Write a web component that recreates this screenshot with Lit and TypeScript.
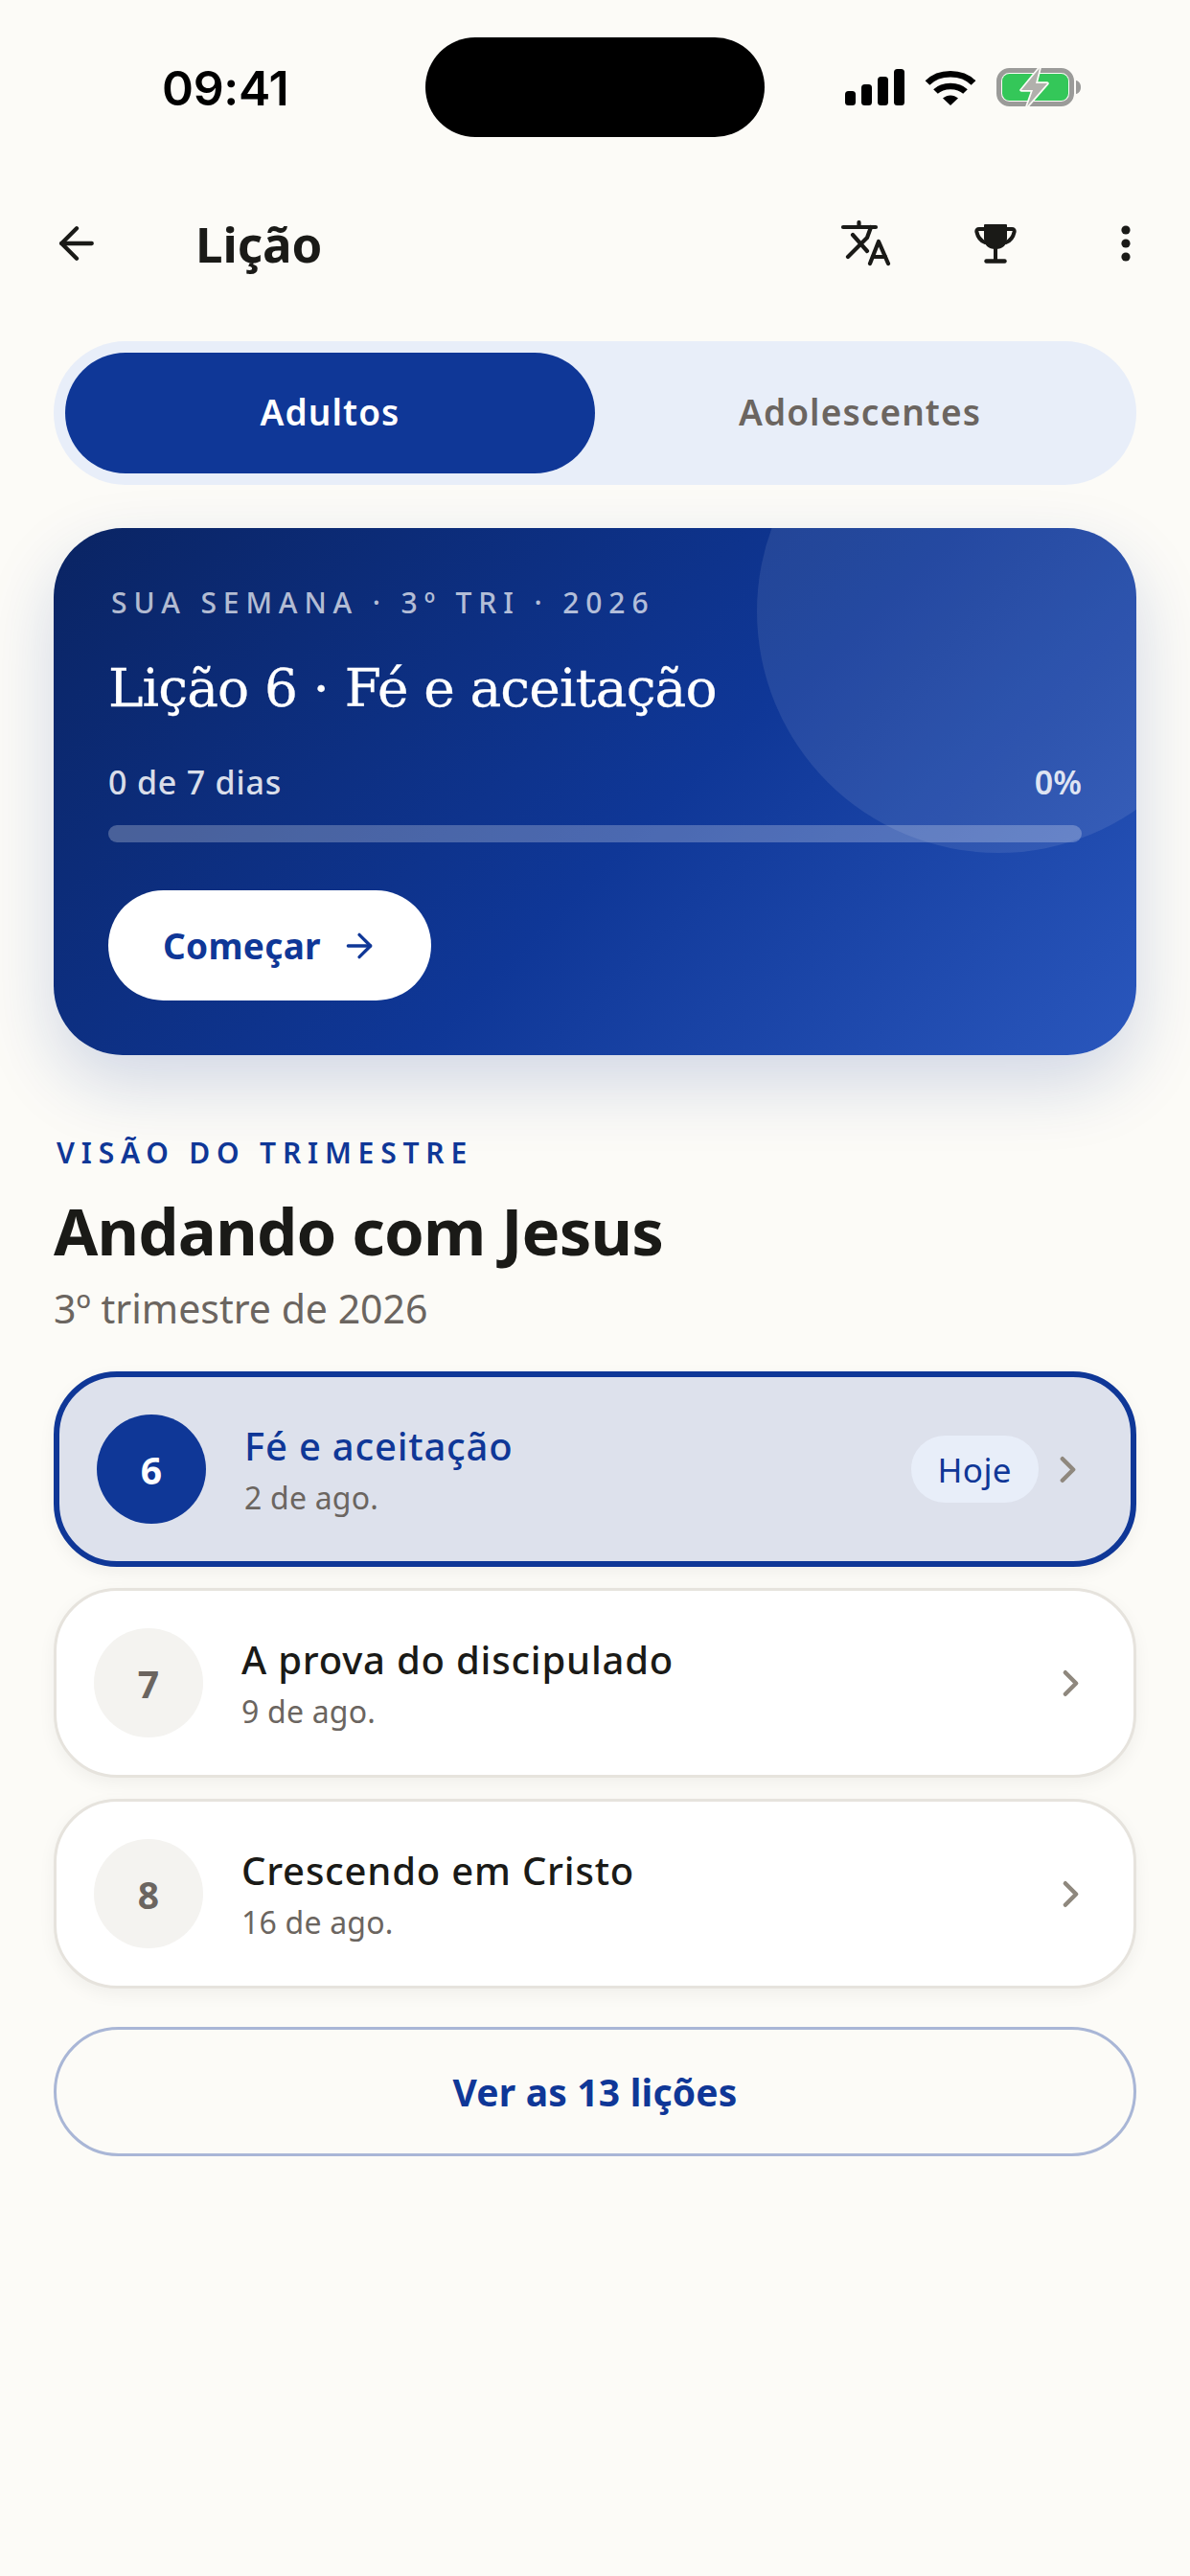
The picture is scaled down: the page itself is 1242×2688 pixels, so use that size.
import { LitElement, css, html, svg } from 'lit';
import { customElement, state } from 'lit/decorators.js';
import { classMap } from 'lit/directives/class-map.js';

interface Lesson {
  num: number;
  title: string;
  date: string;
  today?: boolean;
}

const LESSONS: Lesson[] = [
  { num: 6, title: 'Fé e aceitação', date: '2 de ago.', today: true },
  { num: 7, title: 'A prova do discipulado', date: '9 de ago.' },
  { num: 8, title: 'Crescendo em Cristo', date: '16 de ago.' },
];

const chevron = svg`<svg class="chevron" viewBox="0 0 24 24" fill="none" stroke="currentColor" stroke-width="2.4" stroke-linecap="round" stroke-linejoin="round"><path d="m9 18 6-6-6-6"/></svg>`;

@customElement('app-root')
export class AppRoot extends LitElement {
  @state() private audience: 'adults' | 'teens' = 'adults';

  static styles = css`
    :host {
      display: block;
      width: 1242px;
      min-height: 2688px;
      background: #fcfbf7;
      color: #1a1a17;
      font-family: 'Noto Sans', sans-serif;
    }

    .status {
      display: flex;
      align-items: center;
      height: 104px;
      padding-top: 39px;
      padding-bottom: 33px;
    }

    .time {
      width: 444px;
      box-sizing: border-box;
      padding: 2px 0 0 169px;
      font-family: Inter, sans-serif;
      font-size: 50px;
      font-weight: 600;
      color: #000;
      letter-spacing: -0.3px;
    }

    .island {
      width: 354px;
      height: 104px;
      border-radius: 52px;
      background: #000;
    }

    .status-icons {
      display: flex;
      align-items: center;
      margin-left: 84px;
      gap: 21px;
    }

    .header {
      display: flex;
      align-items: center;
      height: 156px;
    }

    .back {
      width: 54px;
      height: 54px;
      margin-left: 53px;
      display: block;
    }

    .header h1 {
      margin: 0 0 0 97px;
      flex: 1;
      font-size: 51px;
      font-weight: 700;
      line-height: 1;
    }

    .actions {
      display: flex;
      align-items: center;
      padding-right: 62px;
    }

    .actions svg {
      display: block;
    }

    .translate {
      margin-right: -2px;
    }

    .trophy {
      margin-left: 88px;
    }

    .dots {
      margin-left: 109px;
    }

    main {
      padding: 24px 56px 0;
    }

    .tabs {
      display: grid;
      grid-template-columns: 1fr 1fr;
      padding: 12px;
      height: 150px;
      box-sizing: border-box;
      border-radius: 75px;
      background: #e8eef9;
    }

    .tabs button {
      border: none;
      border-radius: 63px;
      background: transparent;
      color: #6b6560;
      font: 600 37px 'Noto Sans', sans-serif;
      letter-spacing: 1.1px;
      padding: 0 0 3px;
    }

    .tabs button.active {
      background: #0f3797;
      color: #fff;
    }

    .week-wrap {
      margin-top: 45px;
      border-radius: 72px;
      box-shadow: 0 30px 72px rgba(15, 55, 151, 0.18);
    }

    .week {
      position: relative;
      overflow: hidden;
      height: 550px;
      box-sizing: border-box;
      padding: 57px 57px 0;
      border-radius: 72px;
      background: linear-gradient(135deg, #0a2463 0%, #0f3797 55%, #2a57bd 100%);
      color: #fff;
    }

    .week::before {
      content: '';
      position: absolute;
      left: 734px;
      top: -165px;
      width: 504px;
      height: 504px;
      border-radius: 50%;
      background: rgba(255, 255, 255, 0.09);
    }

    .week > * {
      position: relative;
    }

    .kicker {
      font-size: 30px;
      line-height: 42px;
      font-weight: 500;
      letter-spacing: 6.9px;
      padding-left: 3px;
      color: rgba(255, 255, 255, 0.7);
    }

    .week h2 {
      margin: 30px 0 0;
      font-family: 'DejaVu Serif', serif;
      font-size: 55px;
      font-weight: 400;
      line-height: 76px;
      letter-spacing: -0.9px;
      -webkit-text-stroke: 0.3px #fff;
    }

    .progress-row {
      display: flex;
      justify-content: space-between;
      margin-top: 36px;
      font-size: 34px;
      line-height: 48px;
      font-weight: 500;
      letter-spacing: 0.8px;
      color: rgba(255, 255, 255, 0.85);
    }

    .progress-row b {
      font-weight: 600;
      letter-spacing: 0;
    }

    .bar {
      margin-top: 21px;
      height: 18px;
      border-radius: 9px;
      background: rgba(255, 255, 255, 0.25);
    }

    .start {
      display: inline-flex;
      align-items: center;
      gap: 20px;
      margin-top: 50px;
      height: 115px;
      padding: 0 55px 0 57px;
      border-radius: 58px;
      background: #fff;
      color: #0f3797;
      font-size: 37px;
      font-weight: 700;
      letter-spacing: 0.3px;
    }

    .start svg {
      width: 40px;
      height: 40px;
    }

    .overline {
      margin-top: 81px;
      padding-left: 3px;
      font-size: 30px;
      line-height: 42px;
      font-weight: 600;
      letter-spacing: 6.8px;
      color: #0f3797;
    }

    .quarter {
      margin: 18px 0 0;
      font-size: 67px;
      line-height: 84px;
      font-weight: 700;
      letter-spacing: -0.8px;
    }

    .sub {
      margin-top: 12px;
      font-size: 41px;
      line-height: 54px;
      color: #6b6560;
    }

    .list {
      display: flex;
      flex-direction: column;
      gap: 22px;
      margin-top: 39px;
    }

    .row {
      display: flex;
      align-items: center;
      gap: 40px;
      padding: 39px 43px 39px 39px;
      border: 3px solid #e6e3dd;
      border-radius: 66px;
      background: #fff;
      box-shadow: 0 6px 18px rgba(26, 26, 23, 0.05);
    }

    .row.today {
      border: 6px solid #0f3797;
      background: #dde1ec;
    }

    .num {
      flex: none;
      display: flex;
      align-items: center;
      justify-content: center;
      width: 114px;
      height: 114px;
      border-radius: 50%;
      background: #f4f3f0;
      color: #6b6560;
      font-size: 39px;
      font-weight: 700;
    }

    .today .num {
      background: #0f3797;
      color: #fff;
    }

    .body {
      flex: 1;
      min-width: 0;
    }

    .title {
      font-size: 40px;
      line-height: 54px;
      font-weight: 500;
      letter-spacing: 0.8px;
    }

    .today .title {
      color: #0f3797;
    }

    .date {
      margin-top: 6px;
      font-size: 32px;
      line-height: 42px;
      letter-spacing: 0.2px;
      color: #6b6560;
    }

    .pill {
      padding: 0 28px;
      height: 70px;
      display: flex;
      align-items: center;
      border-radius: 35px;
      background: #e8eef9;
      color: #0f3797;
      font-size: 35px;
      letter-spacing: 0.4px;
    }

    .chevron {
      flex: none;
      width: 45px;
      height: 45px;
      color: #8f887e;
      margin-left: -32px;
    }

    .all {
      display: flex;
      align-items: center;
      justify-content: center;
      margin-top: 40px;
      height: 135px;
      box-sizing: border-box;
      border: 3px solid rgba(15, 55, 151, 0.35);
      border-radius: 68px;
      color: #0f3797;
      font-size: 39px;
      font-weight: 700;
      letter-spacing: 0.2px;
    }
  `;

  render() {
    return html`
      ${this.renderStatus()}
      <div class="header">
        <svg class="back" viewBox="0 0 24 24" fill="none" stroke="#1a1a17" stroke-width="1.9" stroke-linecap="round" stroke-linejoin="round">
          <path d="m12 19-7-7 7-7" /><path d="M19 12H5" />
        </svg>
        <h1>Lição</h1>
        ${this.renderActions()}
      </div>
      <main>
        <div class="tabs">
          <button class=${classMap({ active: this.audience === 'adults' })} @click=${() => (this.audience = 'adults')}>Adultos</button>
          <button class=${classMap({ active: this.audience === 'teens' })} @click=${() => (this.audience = 'teens')}>Adolescentes</button>
        </div>
        <div class="week-wrap">
          <section class="week">
            <div class="kicker">SUA SEMANA · 3º TRI · 2026</div>
            <h2>Lição 6 · Fé e aceitação</h2>
            <div class="progress-row"><span>0 de 7 dias</span><b>0%</b></div>
            <div class="bar"></div>
            <div class="start">
              Começar
              <svg viewBox="0 0 24 24" fill="none" stroke="currentColor" stroke-width="2" stroke-linecap="round" stroke-linejoin="round">
                <path d="M5 12h14" /><path d="m12 5 7 7-7 7" />
              </svg>
            </div>
          </section>
        </div>
        <div class="overline">VISÃO DO TRIMESTRE</div>
        <h2 class="quarter">Andando com Jesus</h2>
        <div class="sub">3º trimestre de 2026</div>
        <div class="list">
          ${LESSONS.map(
            (l) => html`
              <div class=${classMap({ row: true, today: !!l.today })}>
                <div class="num">${l.num}</div>
                <div class="body">
                  <div class="title">${l.title}</div>
                  <div class="date">${l.date}</div>
                </div>
                ${l.today ? html`<div class="pill">Hoje</div>` : ''}
                ${chevron}
              </div>
            `
          )}
        </div>
        <div class="all">Ver as 13 lições</div>
      </main>
    `;
  }

  private renderStatus() {
    return html`
      <div class="status">
        <div class="time">09:41</div>
        <div class="island"></div>
        <div class="status-icons">
          <svg width="62" height="38" viewBox="0 0 62 38" fill="#000">
            <rect x="0" y="23" width="11" height="15" rx="3.5" />
            <rect x="17" y="16" width="11" height="22" rx="3.5" />
            <rect x="34" y="8" width="11" height="30" rx="3.5" />
            <rect x="51" y="0" width="11" height="38" rx="3.5" />
          </svg>
          <svg width="54" height="38" viewBox="0 0 54 38" fill="none" stroke="#000" stroke-width="6.5">
            <path d="M3 14.5C15 2 39 2 51 14.5" />
            <path d="M11.5 23.5C19 16 35 16 42.5 23.5" />
            <path d="M19 30.5 27 38 35 30.5C30 26.5 24 26.5 19 30.5Z" fill="#000" stroke="none" />
          </svg>
          <svg width="88" height="42" viewBox="0 0 88 42" fill="none">
            <rect x="2.5" y="3.5" width="76" height="35" rx="11" stroke="#9b9b99" stroke-width="5" />
            <rect x="6" y="7" width="69" height="28" rx="7.5" fill="#34c759" />
            <path d="M83 14c3 .5 5 3 5 7s-2 6.500-5 7z" fill="#9b9b99" />
            <path d="M45 1 26 24h12l-6 17 21-24H41z" fill="#b1b0ac" stroke="#fcfbf7" stroke-width="3.500" stroke-linejoin="round" paint-order="stroke" />
          </svg>
        </div>
      </div>
    `;
  }

  private renderActions() {
    return html`
      <div class="actions">
        <svg class="translate" width="54" height="48" viewBox="0 0 54 48" fill="none" stroke="#1a1a17" stroke-width="4.200" stroke-linecap="round" stroke-linejoin="round">
          <path d="M3 7h34" />
          <path d="M19.500 2v4" />
          <path d="M13 15l15 17" />
          <path d="M8 38l20-20 4-11" />
          <path d="M31 45l9-23 10 23" />
          <path d="M34 38h13" />
        </svg>
        <svg class="trophy" width="44" height="44" viewBox="0 0 44 44" fill="none" stroke="#1a1a17" stroke-linecap="round" stroke-linejoin="round">
          <path d="M10 7H5c-2 0-3 1-2.600 3C3.500 15 6 19 11 21" stroke-width="4" />
          <path d="M34 7h5c2 0 3 1 2.600 3C40.500 15 38 19 33 21" stroke-width="4" />
          <path d="M11 3h22v14c0 6-4 10-11 10S11 23 11 17z" fill="#1a1a17" stroke-width="2" />
          <path d="M22 26v13" stroke-width="4" />
          <path d="M12.500 40.500h19" stroke-width="4.500" />
        </svg>
        <svg class="dots" width="10" height="38" viewBox="0 0 10 38" fill="#1a1a17">
          <circle cx="5" cy="5" r="4.600" /><circle cx="5" cy="19" r="4.600" /><circle cx="5" cy="33" r="4.600" />
        </svg>
      </div>
    `;
  }
}

declare global {
  interface HTMLElementTagNameMap {
    'app-root': AppRoot;
  }
}
